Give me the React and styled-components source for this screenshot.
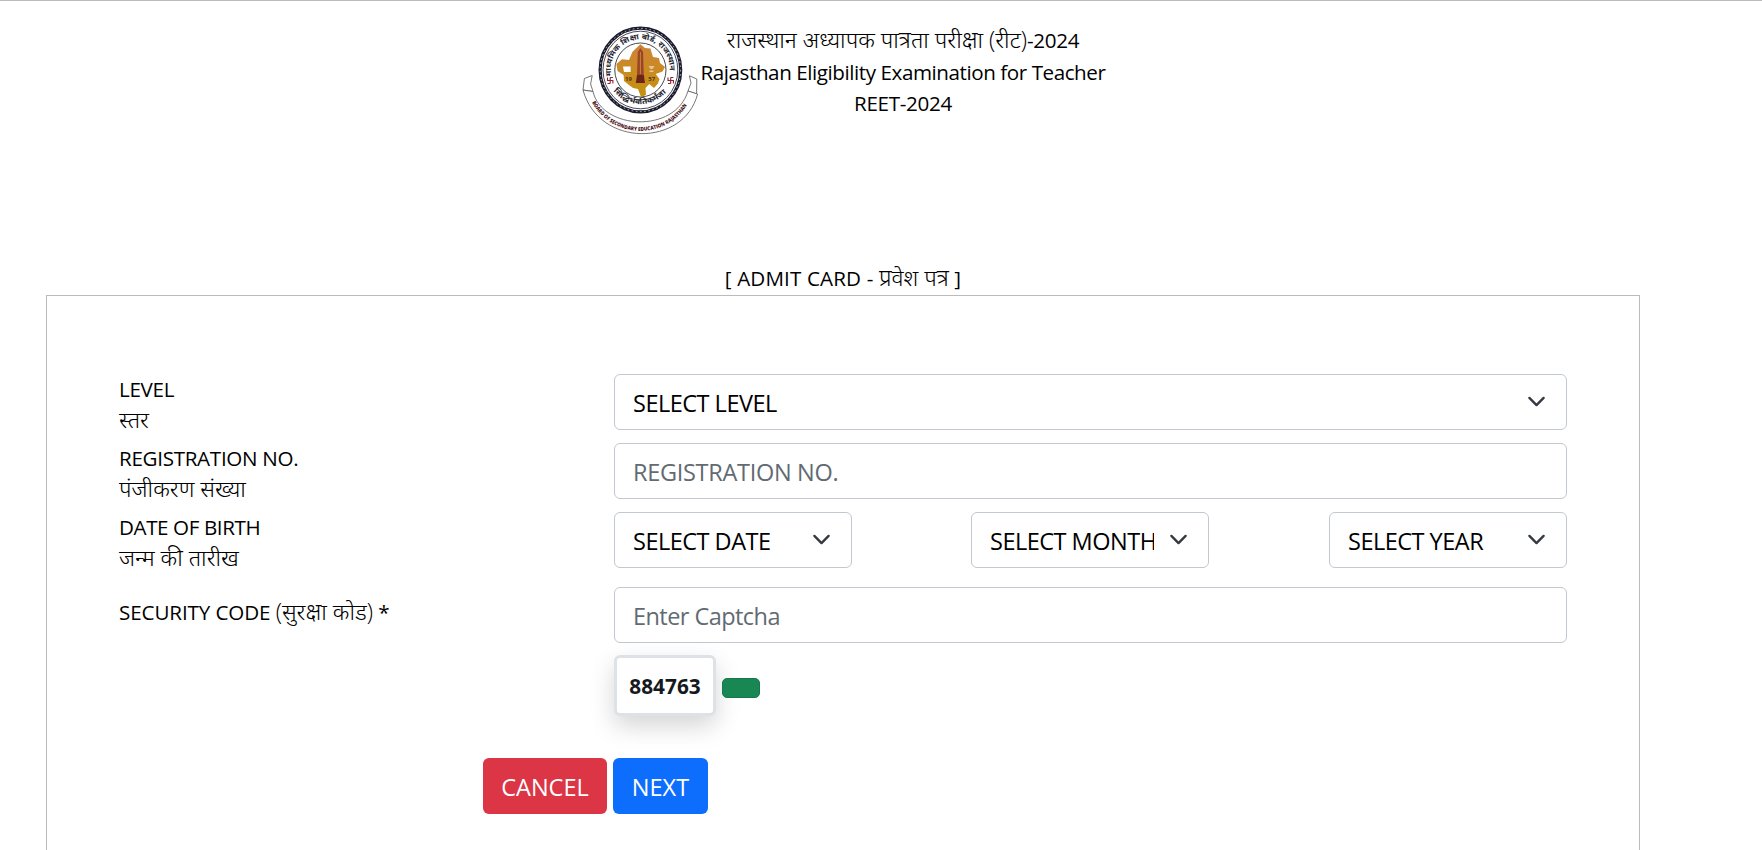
import React, { useState } from "react";
import styled, { createGlobalStyle } from "styled-components";

const latin = `"Open Sans", "Noto Sans", sans-serif`;

const days = Array.from({ length: 31 }, (_, i) => i + 1);
const months = Array.from({ length: 12 }, (_, i) => i + 1);
const years = Array.from({ length: 50 }, (_, i) => 2006 - i);

const BoardLogo = () => (
  <LogoSvg viewBox="581 24 118 112">
    <defs>
      <path id="topArc" d="M611.6 76 A29.4 30.6 0 1 1 669.2 76" />
      <path id="bottomArc" d="M613.4 91 A34.8 35.6 0 0 0 667.4 91" />
      <path id="ribbonArc" d="M592 102.5 A55.3 55.3 0 0 0 687.8 104" />
      <linearGradient id="mapFill" x1="0" y1="0" x2="0" y2="1">
        <stop offset="0" stopColor="#cf8338" />
        <stop offset="1" stopColor="#c4920c" />
      </linearGradient>
    </defs>

    {/* ribbon */}
    <g fill="#fff" stroke="#555" strokeWidth="0.8">
      <path d="M584.4 78.5 L592.2 75.5 L590.6 84 L593 91.5 L583 90 Z" />
      <path d="M689.4 75.8 L696.8 79 L696.6 94 L688 91 L691 83 Z" />
      <path d="M583 90 L593 91.5 C602 130 675 134 688 91 L697.6 94 C684 147 599 148 583 90 Z" />
    </g>
    <text fontSize="5.4" fontWeight="800" fill="#4d1522">
      <textPath href="#ribbonArc" textLength="114" lengthAdjust="spacingAndGlyphs">
        BOARD OF SECONDARY EDUCATION RAJASTHAN
      </textPath>
    </text>

    {/* seal */}
    <ellipse cx="640.4" cy="70" rx="40.3" ry="41.8" fill="#fff" stroke="#1b1c2c" strokeWidth="3.2" />
    <ellipse
      cx="640.4"
      cy="70"
      rx="40.2"
      ry="41.6"
      fill="none"
      stroke="#c5c7d3"
      strokeWidth="0.9"
      strokeDasharray="1.6 2.6"
    />
    <ellipse cx="640.4" cy="70" rx="37.4" ry="38.8" fill="none" stroke="#33344a" strokeWidth="0.9" />
    <ellipse cx="640.4" cy="70" rx="25.6" ry="27" fill="none" stroke="#33343c" strokeWidth="0.9" />
    <text fontSize="7.6" fontWeight="700" fill="#23242e">
      <textPath href="#topArc" textLength="101" lengthAdjust="spacingAndGlyphs">
        माध्यमिक शिक्षा बोर्ड, राजस्थान
      </textPath>
    </text>
    <text fontSize="7.6" fontWeight="700" fill="#23242e">
      <textPath href="#bottomArc" textLength="60" lengthAdjust="spacingAndGlyphs">
        सिद्धिर्भवतिकर्मजा
      </textPath>
    </text>
    <g fill="none" stroke="#8a2433" strokeWidth="1.1">
      <path d="M607.5 77.5 V80.5 H612.9 V83.5 M610.2 77.5 V83.5 M610.2 77.5 H612.9 M607.5 83.5 H610.2" />
      <path d="M668 77.5 V80.5 H673.4 V83.5 M670.7 77.5 V83.5 M670.7 77.5 H673.4 M668 83.5 H670.7" />
    </g>

    {/* state map with the tower */}
    <path
      fill="url(#mapFill)"
      d="M640.4 44.3 L645 48 L650.4 48.5 L653 57 L659 58 L660 63 L665 67 L662.5 71.5 L655.7 74 L659.5 79 L658 83.5 L654 88 L649.3 84 L645.5 88 L646 95 L641 97 L638 89 L633 88 L629 85 L624 81 L623.6 75 L617.5 71 L616.4 64 L622 59.3 L629 60 L632.5 51.7 Z"
    />
    <path fill="#fff" d="M623 66.5 H630.6 V72 H624 Z" />
    <path fill="#e8c49a" d="M648.5 66 H654.5 L652.5 69 H650.5 Z M649.5 70.5 H653.5 V72 H649.5 Z" />
    <path fill="#9c4524" d="M640.4 48 L643 52 L643.8 76 H637 L637.8 52 Z" />
    <path fill="#6b2417" d="M637 75 H643.8 L645 83 H635.8 Z" />
    <path stroke="#d98e54" strokeWidth="0.8" d="M640.4 52 V74" />
    <text x="625" y="80.5" fontSize="6" fontWeight="700" fill="#5c3312">
      19
    </text>
    <text x="648.3" y="80.5" fontSize="6" fontWeight="700" fill="#5c3312">
      57
    </text>
  </LogoSvg>
);

const Dropdown = ({ label, options }) => (
  <SelectWrap>
    <Select defaultValue="">
      <option value="">{label}</option>
      {options.map((o) => (
        <option key={o} value={o}>
          {o}
        </option>
      ))}
    </Select>
    <Chevron viewBox="0 0 16 16">
      <path
        fill="none"
        stroke="#343a40"
        strokeLinecap="round"
        strokeLinejoin="round"
        strokeWidth="2"
        d="m2 5 6 6 6-6"
      />
    </Chevron>
  </SelectWrap>
);

const App = () => {
  const [regNo, setRegNo] = useState("");
  const [captcha, setCaptcha] = useState("");

  return (
    <>
      <GlobalStyle />
      <Page>
        <Header>
          <BoardLogo />
          <Titles>
            <Line>
              <Hindi>राजस्थान अध्यापक पात्रता परीक्षा (रीट)</Hindi>-2024
            </Line>
            <Line $spacing="-0.43px">Rajasthan Eligibility Examination for Teacher</Line>
            <Line $spacing="-0.3px">REET-2024</Line>
          </Titles>
        </Header>
        <FormTitle>
          [ ADMIT CARD - <Hindi>प्रवेश पत्र</Hindi> ]
        </FormTitle>
        <Panel>
          <Row>
            <Label>
              <Line>LEVEL</Line>
              <Line>
                <Hindi>स्तर</Hindi>
              </Line>
            </Label>
            <Dropdown label="SELECT LEVEL" options={["LEVEL 1", "LEVEL 2"]} />
          </Row>
          <Row>
            <Label>
              <Line>REGISTRATION NO.</Line>
              <Line>
                <Hindi>पंजीकरण संख्या</Hindi>
              </Line>
            </Label>
            <Input
              placeholder="REGISTRATION NO."
              value={regNo}
              onChange={(e) => setRegNo(e.target.value)}
            />
          </Row>
          <Row>
            <Label>
              <Line $spacing="-0.4px">DATE OF BIRTH</Line>
              <Line>
                <Hindi>जन्म की तारीख</Hindi>
              </Line>
            </Label>
            <DateGroup>
              <Dropdown label="SELECT DATE" options={days} />
              <Dropdown label="SELECT MONTH" options={months} />
              <Dropdown label="SELECT YEAR" options={years} />
            </DateGroup>
          </Row>
          <Row $last>
            <Label $offset>
              <Line $spacing="-0.1px">
                SECURITY CODE <Hindi>(सुरक्षा कोड)</Hindi> *
              </Line>
            </Label>
            <div>
              <Input
                $spacing="-0.55px"
                placeholder="Enter Captcha"
                value={captcha}
                onChange={(e) => setCaptcha(e.target.value)}
              />
              <CaptchaRow>
                <CaptchaCode>884763</CaptchaCode>
                <RefreshButton aria-label="Refresh" />
              </CaptchaRow>
            </div>
          </Row>
          <Actions>
            <Button $bg="#dc3545" $width="124px">
              CANCEL
            </Button>
            <Button $bg="#0d6efd" $width="95px">
              NEXT
            </Button>
          </Actions>
        </Panel>
      </Page>
    </>
  );
};

const GlobalStyle = createGlobalStyle`
  * {
    box-sizing: border-box;
  }
  body {
    margin: 0;
    background: #fff;
    color: #000;
    font-family: ${latin};
    font-size: 20.6px;
    line-height: 31.5px;
    overflow: hidden;
  }
`;

const Page = styled.div`
  height: 850px;
  padding: 23px 122px 0 46px;
  border-top: 1px solid #bbb;
  overflow: hidden;
`;

const Header = styled.header`
  display: flex;
  justify-content: center;
  align-items: flex-start;
  gap: 2px;
  height: 239px;
`;

const LogoSvg = styled.svg`
  width: 118px;
  height: 112px;
  font-family: ${latin};
`;

const Titles = styled.div`
  padding-top: 1px;
  line-height: 31.6px;
  text-align: center;
`;

const Line = styled.div`
  white-space: nowrap;
  letter-spacing: ${(p) => p.$spacing || "-0.3px"};
`;

const Hindi = styled.span`
  font-size: 22.9px;
  font-weight: 350;
  line-height: 1;
  letter-spacing: 0;
`;

const FormTitle = styled.div`
  height: 32px;
  text-align: center;
  letter-spacing: 0.15px;
`;

const Panel = styled.main`
  height: 600px;
  padding: 78px 72px 0;
  border: 1px solid #bbb;
`;

const Row = styled.div`
  display: grid;
  grid-template-columns: 495px 953px;
  height: 69px;
  ${(p) => p.$last && "height: 171px; margin-top: 6px;"}
`;

const Label = styled.div`
  padding-top: ${(p) => (p.$offset ? "10px" : "0")};
  line-height: 31px;
`;

const Input = styled.input`
  display: block;
  width: 100%;
  height: 56px;
  padding: 2px 18px 0;
  border: 1px solid #c1c8cf;
  border-radius: 6px;
  background: #fff;
  color: #000;
  outline: none;
  font-family: inherit;
  font-size: 23.5px;
  letter-spacing: ${(p) => p.$spacing || "-0.3px"};
  &::placeholder {
    color: #626a72;
    opacity: 1;
  }
`;

const SelectWrap = styled.div`
  position: relative;
  height: 56px;
`;

const Select = styled.select`
  appearance: none;
  display: block;
  width: 100%;
  height: 56px;
  padding: 2px 54px 0 18px;
  border: 1px solid #c1c8cf;
  border-radius: 6px;
  background: #fff;
  color: #000;
  outline: none;
  font-family: inherit;
  font-size: 23.5px;
  letter-spacing: -0.5px;
`;

const Chevron = styled.svg`
  position: absolute;
  top: 18px;
  right: 21px;
  width: 19px;
  height: 19px;
  pointer-events: none;
`;

const DateGroup = styled.div`
  display: grid;
  grid-template-columns: 357px 358px 238px;
  ${SelectWrap} {
    width: 238px;
  }
`;

const CaptchaRow = styled.div`
  display: flex;
  align-items: center;
  gap: 6px;
  margin-top: 12px;
`;

const CaptchaCode = styled.div`
  width: 102px;
  height: 61px;
  border: 3px solid #dee2e6;
  border-radius: 6px;
  background: #fff;
  box-shadow: 0 10px 24px rgba(0, 0, 0, 0.17);
  color: #16191c;
  font-weight: 700;
  font-size: 20.8px;
  line-height: 57px;
  text-align: center;
`;

const RefreshButton = styled.button`
  width: 38px;
  height: 20px;
  margin-top: 5px;
  padding: 0;
  border: 1px solid #157a49;
  border-radius: 5px;
  background: #198754;
  cursor: pointer;
`;

const Actions = styled.div`
  display: flex;
  gap: 6px;
  padding-left: 364px;
`;

const Button = styled.button`
  width: ${(p) => p.$width};
  height: 56px;
  padding: 2px 0 0;
  border: none;
  border-radius: 6px;
  background: ${(p) => p.$bg};
  color: #fff;
  cursor: pointer;
  font-family: inherit;
  font-size: 23.5px;
`;

export default App;
